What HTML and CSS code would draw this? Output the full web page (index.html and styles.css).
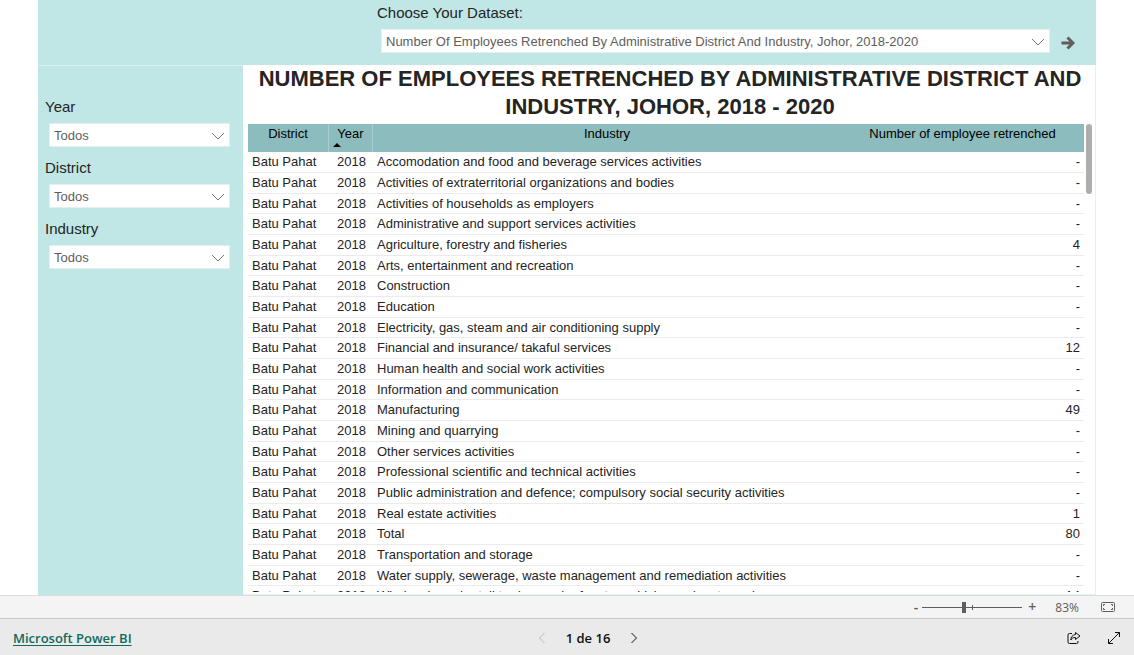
FILE: index.html
```
<!DOCTYPE html>
<html lang="en">
<head>
<meta charset="utf-8">
<meta name="viewport" content="width=device-width, initial-scale=1">
<title>Number of employees retrenched</title>
<link rel="stylesheet" href="styles.css">
</head>
<body>
<div class="report">
  <header class="dataset">
    <label class="label" for="dataset">Choose Your Dataset:</label>
    <div class="dataset-row">
      <div class="dropdown">
        <select id="dataset"><option>Number Of Employees Retrenched By Administrative District And Industry, Johor, 2018-2020</option></select>
        <svg class="chevron" viewBox="0 0 14 8" aria-hidden="true"><path d="M1 1l6 6 6-6"/></svg>
      </div>
      <button class="go" aria-label="Go"><svg viewBox="0 0 14 14" aria-hidden="true"><path d="M0.500 7H12M6.500 1.500L12 7 6.500 12.500"/></svg></button>
    </div>
  </header>
  <div class="content">
    <aside class="filters">
      <div class="filter">
        <label class="label" for="year">Year</label>
        <div class="dropdown">
          <select id="year"><option>Todos</option></select>
          <svg class="chevron" viewBox="0 0 14 8" aria-hidden="true"><path d="M1 1l6 6 6-6"/></svg>
        </div>
      </div>
      <div class="filter">
        <label class="label" for="district">District</label>
        <div class="dropdown">
          <select id="district"><option>Todos</option></select>
          <svg class="chevron" viewBox="0 0 14 8" aria-hidden="true"><path d="M1 1l6 6 6-6"/></svg>
        </div>
      </div>
      <div class="filter">
        <label class="label" for="industry">Industry</label>
        <div class="dropdown">
          <select id="industry"><option>Todos</option></select>
          <svg class="chevron" viewBox="0 0 14 8" aria-hidden="true"><path d="M1 1l6 6 6-6"/></svg>
        </div>
      </div>
    </aside>
    <main class="panel">
      <h1 class="title">NUMBER OF EMPLOYEES RETRENCHED BY ADMINISTRATIVE DISTRICT AND INDUSTRY, JOHOR, 2018 - 2020</h1>
      <div class="viewport">
        <div class="table-clip">
          <table class="grid">
            <colgroup><col class="c-district"><col class="c-year"><col><col class="c-number"></colgroup>
            <thead><tr><th>District</th><th class="sorted">Year</th><th>Industry</th><th>Number of employee retrenched</th></tr></thead>
            <tbody>
              <tr><td>Batu Pahat</td><td>2018</td><td>Accomodation and food and beverage services activities</td><td>-</td></tr>
              <tr><td>Batu Pahat</td><td>2018</td><td>Activities of extraterritorial organizations and bodies</td><td>-</td></tr>
              <tr><td>Batu Pahat</td><td>2018</td><td>Activities of households as employers</td><td>-</td></tr>
              <tr><td>Batu Pahat</td><td>2018</td><td>Administrative and support services activities</td><td>-</td></tr>
              <tr><td>Batu Pahat</td><td>2018</td><td>Agriculture, forestry and fisheries</td><td>4</td></tr>
              <tr><td>Batu Pahat</td><td>2018</td><td>Arts, entertainment and recreation</td><td>-</td></tr>
              <tr><td>Batu Pahat</td><td>2018</td><td>Construction</td><td>-</td></tr>
              <tr><td>Batu Pahat</td><td>2018</td><td>Education</td><td>-</td></tr>
              <tr><td>Batu Pahat</td><td>2018</td><td>Electricity, gas, steam and air conditioning supply</td><td>-</td></tr>
              <tr><td>Batu Pahat</td><td>2018</td><td>Financial and insurance/ takaful services</td><td>12</td></tr>
              <tr><td>Batu Pahat</td><td>2018</td><td>Human health and social work activities</td><td>-</td></tr>
              <tr><td>Batu Pahat</td><td>2018</td><td>Information and communication</td><td>-</td></tr>
              <tr><td>Batu Pahat</td><td>2018</td><td>Manufacturing</td><td>49</td></tr>
              <tr><td>Batu Pahat</td><td>2018</td><td>Mining and quarrying</td><td>-</td></tr>
              <tr><td>Batu Pahat</td><td>2018</td><td>Other services activities</td><td>-</td></tr>
              <tr><td>Batu Pahat</td><td>2018</td><td>Professional scientific and technical activities</td><td>-</td></tr>
              <tr><td>Batu Pahat</td><td>2018</td><td>Public administration and defence; compulsory social security activities</td><td>-</td></tr>
              <tr><td>Batu Pahat</td><td>2018</td><td>Real estate activities</td><td>1</td></tr>
              <tr><td>Batu Pahat</td><td>2018</td><td>Total</td><td>80</td></tr>
              <tr><td>Batu Pahat</td><td>2018</td><td>Transportation and storage</td><td>-</td></tr>
              <tr><td>Batu Pahat</td><td>2018</td><td>Water supply, sewerage, waste management and remediation activities</td><td>-</td></tr>
              <tr><td>Batu Pahat</td><td>2018</td><td>Wholesale and retail trade, repair of motor vehicles and motorcycles</td><td>14</td></tr>
            </tbody>
          </table>
        </div>
        <div class="scroll-thumb"></div>
      </div>
    </main>
  </div>
</div>
<div class="zoombar">
  <button aria-label="Zoom out">-</button>
  <div class="slider"><input type="range" min="0" max="100" value="41" aria-label="Zoom"></div>
  <button aria-label="Zoom in">+</button>
  <span class="percent">83%</span>
  <button class="fit" aria-label="Fit to page"><svg viewBox="0 0 14 10" aria-hidden="true"><rect x=".5" y=".5" width="13" height="9" rx="1"/><path d="M2.500 4V2.500H4M10 2.500h1.500V4M11.500 6v1.500H10M4 7.500H2.500V6"/></svg></button>
</div>
<footer class="footer">
  <a class="brand" href="#">Microsoft Power BI</a>
  <nav class="pager">
    <button class="off" aria-label="Previous page"><svg viewBox="0 0 6 12" aria-hidden="true"><path d="M5.500 1L.5 6l5 5"/></svg></button>
    <span>1 de 16</span>
    <button aria-label="Next page"><svg viewBox="0 0 6 12" aria-hidden="true"><path d="M.5 1l5 5-5 5"/></svg></button>
  </nav>
  <div class="actions">
    <button aria-label="Share"><svg viewBox="0 0 14 14" aria-hidden="true"><path d="M5 2.500H2.500a1.500 1.500 0 0 0-1.500 1.500v7A1.500 1.500 0 0 0 2.500 12.500h7A1.500 1.500 0 0 0 11 11v-1"/><path d="M8.500 1.500L13 5 8.500 8.500V6.500C6 6.400 4.800 7.400 3.800 9 4 6 5.500 3.800 8.500 3.500z"/></svg></button>
    <button aria-label="Full screen"><svg viewBox="0 0 14 14" aria-hidden="true"><path d="M1.500 12.500l11-11M8 1.500h4.500V6M1.500 8v4.500H6"/></svg></button>
  </div>
</footer>
</body>
</html>
```
FILE: styles.css
```
* { box-sizing: border-box; }
body {
  margin: 0;
  height: 100vh;
  display: flex;
  flex-direction: column;
  overflow: hidden;
  background: #fff;
  color: #252423;
  font-family: "Liberation Sans", Arial, sans-serif;
  font-size: 13px;
}
button {
  display: flex;
  padding: 0;
  border: 0;
  background: none;
  color: inherit;
  font: inherit;
}
svg { display: block; fill: none; stroke: currentColor; }

.report {
  flex: 1;
  min-height: 0;
  display: flex;
  flex-direction: column;
  margin: 0 38px;
}
.dataset {
  height: 65px;
  padding: 4px 21px 0 339px;
  background: #c0e6e6;
}
.label { display: block; font-size: 15px; line-height: 18px; }
.dataset-row {
  display: flex;
  align-items: center;
  gap: 11px;
  padding: 7px 0 0 4px;
}
.dataset-row .dropdown { flex: 1; }
.go { padding-top: 3px; color: #605e5c; }
.go svg { width: 14px; height: 14px; stroke-width: 3; }

.dropdown { display: grid; align-items: center; }
.dropdown select {
  grid-area: 1 / 1;
  width: 100%;
  height: 24px;
  padding: 0 24px 0 4px;
  border: 1px solid #e6eeee;
  border-radius: 0;
  background: #fff;
  color: #605e5c;
  font: inherit;
  appearance: none;
}
.chevron {
  grid-area: 1 / 1;
  justify-self: end;
  width: 14px;
  height: 8px;
  margin: 1px 5px 0 0;
  color: #777;
  pointer-events: none;
}

.content { flex: 1; min-height: 0; display: flex; }
.filters {
  width: 205px;
  padding: 32px 13px 0 7px;
  border-top: 1px solid #d8efef;
  background: #c0e6e6;
  display: flex;
  flex-direction: column;
  gap: 12px;
}
.filter .dropdown { padding: 7px 0 0 4px; }

.panel {
  flex: 1;
  min-width: 0;
  display: flex;
  flex-direction: column;
  padding: 0 3px 2px 5px;
  border: 1px solid #e0f2f2;
  border-width: 0 1px 1px 0;
}
.title {
  margin: 0;
  padding-bottom: 3px;
  font-size: 22px;
  font-weight: 900;
  line-height: 28px;
  text-align: center;
}
.viewport { flex: 1; min-height: 0; display: flex; gap: 2px; }
.table-clip { flex: 1; min-width: 0; overflow: hidden; }
.scroll-thumb { width: 6px; height: 70px; border-radius: 3px; background: #b0aeac; }
.grid { width: 100%; table-layout: fixed; border-collapse: separate; border-spacing: 0; }
.c-district { width: 81px; }
.c-year { width: 44px; }
.c-number { width: 243px; }
.grid th {
  height: 28px;
  padding: 2px 0 0;
  background: #8dbcbe;
  color: #000;
  font-weight: 400;
  line-height: 16px;
  vertical-align: top;
}
.grid th:nth-child(-n+2) { border-right: 1px solid #a9cdce; }
.sorted { position: relative; }
.sorted::after {
  content: "";
  position: absolute;
  left: 4px;
  bottom: 5px;
  border: 4px solid transparent;
  border-top: 0;
  border-bottom-color: #000;
}
.grid td {
  height: 21px;
  padding: 0 4px;
  border-bottom: 1px solid #ebebeb;
  line-height: 18px;
  white-space: nowrap;
}
.grid tbody tr:nth-child(3n) td { height: 20px; }
.grid td:nth-child(2) { text-align: right; padding-right: 7px; }
.grid td:last-child { text-align: right; }

.zoombar {
  height: 24px;
  display: flex;
  align-items: center;
  justify-content: flex-end;
  padding-right: 19px;
  border-top: 1px solid #dcdcdc;
  border-bottom: 1px solid #c6c6c6;
  background: #f4f4f4;
  color: #605e5c;
  font-family: "Open Sans", "Segoe UI", sans-serif;
  font-size: 12px;
}
.zoombar button { font-size: 14px; font-weight: 600; line-height: 16px; }
.slider { position: relative; width: 100px; height: 12px; margin: 0 6px 0 4px; }
.slider::after {
  content: "";
  position: absolute;
  left: 50px;
  top: 4px;
  width: 1px;
  height: 5px;
  background: #605e5c;
}
.slider input {
  display: block;
  width: 100%;
  height: 12px;
  margin: 0;
  background: linear-gradient(#605e5c, #605e5c) center / 100% 1px no-repeat;
  appearance: none;
}
.slider input::-webkit-slider-thumb {
  appearance: none;
  width: 4px;
  height: 11px;
  background: #605e5c;
}
.percent { margin: 0 22px 0 19px; }
.fit svg { width: 14px; height: 10px; }

.footer {
  height: 36px;
  display: grid;
  grid-template-columns: 1fr auto 1fr;
  align-items: center;
  padding: 2px 13px 0;
  background: #eaeaea;
  color: #111;
  font-family: "Open Sans", "Segoe UI", sans-serif;
}
.brand { color: #0e6a5c; font-weight: 600; text-underline-offset: 2px; }
.pager { display: flex; align-items: center; gap: 21px; margin-left: 42px; font-weight: 600; }
.pager svg { width: 6px; height: 12px; }
.off { color: #bbb; }
.actions { display: flex; justify-content: flex-end; gap: 26px; }
.actions svg { width: 14px; height: 14px; }
```
